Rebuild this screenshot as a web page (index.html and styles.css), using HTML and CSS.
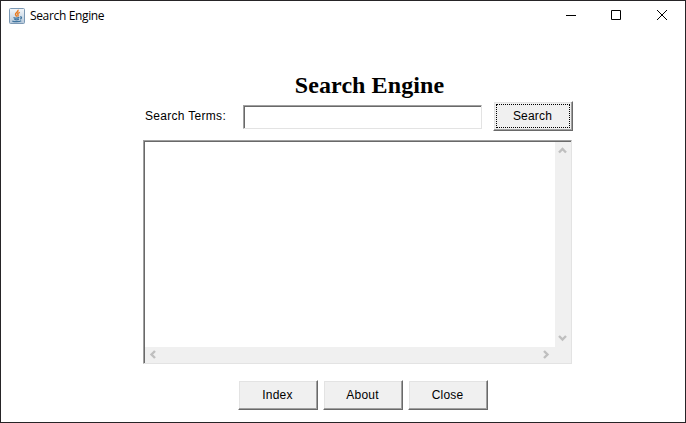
FILE: index.html
```html
<!DOCTYPE html>
<html lang="en">
<head>
<meta charset="utf-8">
<title>Search Engine</title>
<link rel="stylesheet" href="styles.css">
</head>
<body>
<div class="window">
  <header class="titlebar">
    <svg class="app-icon" width="16" height="16" viewBox="0 0 16 16">
      <defs>
        <linearGradient id="tile" x1="0" y1="0" x2="0" y2="1">
          <stop offset="0" stop-color="#f4f7fa"/>
          <stop offset="1" stop-color="#b5c8da"/>
        </linearGradient>
      </defs>
      <rect x=".5" y=".5" width="15" height="15" rx="1" fill="url(#tile)" stroke="#7b98b4"/>
      <path d="M9 1.800C10 4 6 4.500 6.500 6.500C6.700 7.400 7.600 7.800 7.600 8.700M10.800 4.300C8.800 5 8.300 5.800 9 6.700C9.500 7.500 8.900 8 8.700 8.500" fill="none" stroke="#e87a20" stroke-width="1.400"/>
      <path d="M4.500 9.400C6 10.300 9 10.100 10.300 9.400M5.300 11.400Q7.500 12.200 10 11.400M3.300 12.900C5 14 10.500 14 12.200 12.700M11 9C13.500 8.600 12.500 10.800 11 11" fill="none" stroke="#41759f" stroke-width="1.200"/>
    </svg>
    <span class="title">Search Engine</span>
    <svg class="control" width="46" height="29" viewBox="0 0 46 29"><path d="M19 14.500h10"/></svg>
    <svg class="control" width="46" height="29" viewBox="0 0 46 29"><path d="M18.500 9.500h9v9h-9z"/></svg>
    <svg class="control" width="46" height="29" viewBox="0 0 46 29"><path d="M18 9l10 10M28 9l-10 10"/></svg>
  </header>
  <main class="content">
    <h1 class="heading">Search Engine</h1>
    <form class="search-row">
      <label class="label" for="terms">Search Terms:</label>
      <input class="field" id="terms" type="text">
      <button class="button focused" type="button">Search</button>
    </form>
    <section class="results">
      <div class="viewport"></div>
      <div class="scroll vertical">
        <svg width="15" height="16" viewBox="0 0 15 16"><path d="M4 10.500l3.500-3.500l3.500 3.500"/></svg>
        <svg width="15" height="16" viewBox="0 0 15 16"><path d="M4 5l3.500 3.500l3.500-3.500"/></svg>
      </div>
      <div class="scroll horizontal">
        <svg width="16" height="16" viewBox="0 0 16 16"><path d="M10 4l-3.500 3.500l3.500 3.500"/></svg>
        <svg width="16" height="16" viewBox="0 0 16 16"><path d="M5 4l3.500 3.500l-3.500 3.500"/></svg>
      </div>
      <div class="corner"></div>
    </section>
    <div class="actions">
      <button class="button" type="button">Index</button>
      <button class="button" type="button">About</button>
      <button class="button" type="button">Close</button>
    </div>
  </main>
</div>
</body>
</html>
```

FILE: styles.css
```css
* { box-sizing: border-box; }
body {
  margin: 0;
  background: #fff;
  color: #000;
  font-family: "Liberation Sans", Arial, sans-serif;
  font-size: 12px;
}
.window {
  width: 686px;
  height: 423px;
  border: 1px solid #262427;
  overflow: hidden;
}
.titlebar {
  display: flex;
  align-items: center;
  height: 29px;
  padding-left: 8px;
}
.title {
  flex: 1;
  margin-left: 5px;
  font-family: "Segoe UI", "Open Sans", sans-serif;
  font-size: 12px;
  letter-spacing: -0.35px;
  line-height: 16px;
}
.control { fill: none; stroke: #000; }
.content { padding-left: 142px; }
.heading {
  width: 429px;
  margin: 42px 0 0;
  padding-left: 24px;
  font: bold 24px/27px "Liberation Serif", "Times New Roman", serif;
  letter-spacing: 0.08px;
  text-align: center;
}
.search-row {
  display: flex;
  align-items: center;
  height: 30px;
  margin: 2px 0 0;
}
.label {
  width: 100px;
  padding-left: 2px;
  letter-spacing: 0.3px;
}
.field {
  width: 239px;
  height: 24px;
  margin: 2px 11px 0 0;
  padding: 0 2px;
  background: #fff;
  border: 1px solid;
  border-color: #a0a0a0 #e3e3e3 #e3e3e3 #a0a0a0;
  box-shadow: inset 1px 1px #696969;
  outline: 0;
}
.button {
  display: grid;
  place-items: center;
  width: 80px;
  height: 30px;
  padding: 0 1px 1px 0;
  border: 1px solid;
  border-color: #fff #696969 #696969 #fff;
  box-shadow: inset -1px -1px #a0a0a0, inset 1px 1px #e3e3e3;
  background: #f0f0f0;
  color: #000;
  font: 12px "Liberation Sans", Arial, sans-serif;
  letter-spacing: 0.2px;
  position: relative;
}
.focused::after {
  content: "";
  position: absolute;
  inset: 2px;
  border: 1px dotted #000;
}
.results {
  display: grid;
  grid-template: 1fr 16px / 1fr 16px;
  width: 429px;
  height: 224px;
  margin-top: 9px;
  padding: 1px 0 0 1px;
  border: 1px solid;
  border-color: #a0a0a0 #e3e3e3 #e3e3e3 #a0a0a0;
  box-shadow: inset 1px 1px #696969;
}
.scroll {
  display: flex;
  justify-content: space-between;
  background: #f0f0f0;
}
.vertical { flex-direction: column; }
.scroll svg { fill: none; stroke: #bfbfbf; stroke-width: 2.4; }
.corner { background: #f0f0f0; }
.actions {
  display: flex;
  gap: 5px;
  margin: 16px 0 0 95px;
}
```
